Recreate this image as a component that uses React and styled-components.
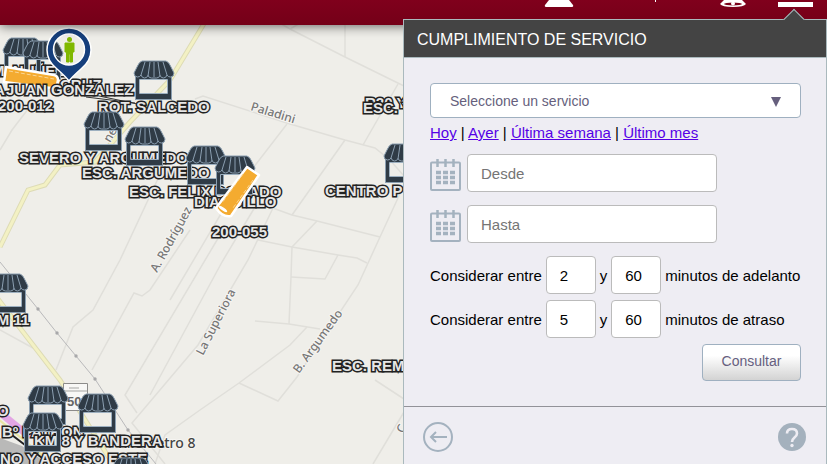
import { useState } from 'react';
import styled, { createGlobalStyle } from 'styled-components';

const STORES = [
  [2, 37], [22, 40], [133, 60], [83, 111], [124, 126], [185, 145], [214, 155],
  [383, 143], [-13, 273], [27, 385], [77, 393], [22, 412], [110, 457],
];

const LABELS = [
  { text: 'M. NUÑEZ', x: -8, y: 71 },
  { text: 'CRUZ', x: 60, y: 85 },
  { text: 'ROT. SALCEDO', x: 98, y: 107 },
  { text: '200-012', x: -2, y: 106 },
  { text: 'SEVERO Y ARGUMEDO', x: 19, y: 158 },
  { text: 'ESC. ARGUMEDO', x: 82, y: 173 },
  { text: 'ESC. FELIX DORADO', x: 129, y: 192 },
  { text: 'DIAGUILLO', x: 194, y: 202 },
  { text: '200-055', x: 212, y: 232 },
  { text: 'R20 Y', x: 365, y: 103 },
  { text: 'ESC. Y', x: 363, y: 108 },
  { text: 'CENTRO P', x: 325, y: 191 },
  { text: 'ESC. REM', x: 332, y: 366 },
  { text: 'KM 11', x: -14, y: 320 },
  { text: 'O', x: -3, y: 411 },
  { text: 'Bº PATRON', x: 2, y: 432 },
  { text: 'NO Y ACCESO ESTE', x: 0, y: 459 },
  { text: 'KM 8 Y BANDERA', x: 34, y: 441 },
];

const TOP_LABELS = [
  { text: 'A', x: -6, y: 90 },
  { text: 'JUAN GONZALEZ', x: 6, y: 90 },
];

const STREETS = [
  'M278 22L290 29L345 57L404 86', 'M345 22V57', 'M302 22L290 29', 'M398 84L363 145',
  'M195 99L203 96L290 124L345 140L375 148L390 160L404 176', 'M287 124L250 172L225 207L170 300',
  'M345 140L292 215', 'M270 207L292 215L317 221L380 237', 'M404 185L380 237L358 285L297 377L278 401L239 383',
  'M317 221L292 247', 'M258 240L292 247L338 255L357 258L367 263', 'M292 247L291 277L289 324',
  'M291 277L325 279L338 255', 'M273 208L248 260L198 345L132 423L165 464', 'M255 207L222 262L150 395',
  'M255 321L289 324L320 329', 'M307 327L290 345L239 383L200 410L165 435L155 464',
  'M375 380L404 399', 'M373 464L404 412', 'M163 168L120 260L93 310L73 327L56 370',
  'M190 230L150 290L142 296L134 293L92 370', 'M220 235L125 395L137 413', 'M0 330L33 348',
  'M0 150L12 130L35 100',
];

const YELLOW_ROADS = [
  'M205 22L170 80L130 122L95 162L60 165L45 185L28 190L0 247',
  'M-5 295L20 328L60 380L113 464',
];

const STREET_NAMES = [
  { text: 'Paladini', x: 250, y: 110, angle: 17 },
  { text: 'A. Rodríguez', x: 157, y: 273, angle: -61 },
  { text: 'La Superiora', x: 203, y: 356, angle: -63 },
  { text: 'B. Argumedo', x: 299, y: 374, angle: -54 },
  { text: 'ne', x: 110, y: 143, angle: -60 },
  { text: 'C', x: 403, y: 434, angle: -60 },
];

const StoreIcon = () => (
  <svg width="42" height="40" viewBox="0 0 42 40" aria-hidden="true">
    <path d="M3 16H38V39H3Z" fill="none" stroke="#8b9fb1" strokeWidth="2" />
    <path fillRule="evenodd" d="M3 15H38V39H3ZM7 20V33H34V20Z" fill="#2f3b46" />
    <path d="M6.500 19.500H34.500V33.500H6.500Z" fill="none" stroke="#9db0c0" />
    <path
      d="M9 1H33Q36 2 38 7L41 13Q41 17 37.500 17Q35 17 34 15Q33 18 30.500 18Q28 18 27 15.500Q26 18 23.500 18H18.500Q16 18 15 15.500Q14 18 11.500 18Q9 18 8 15Q7 17 4.500 17Q1 17 1 13L4 7Q6 2 9 1Z"
      fill="#2f3b46"
      stroke="#8b9fb1"
    />
    <path d="M12 2L8 15M17 2L15 16M21 2V17M25 2L27 16M30 2L34 15" stroke="#8b9fb1" fill="none" />
  </svg>
);

const CalendarIcon = () => (
  <svg width="31" height="32" viewBox="0 0 31 32" fill="none" aria-hidden="true">
    <rect x="1" y="3.500" width="29" height="27.500" rx="1" stroke="#a4b2bf" strokeWidth="2" />
    <path d="M7.500 0V8M15.500 0V8M23.500 0V8" stroke="#a4b2bf" strokeWidth="2.500" />
    <path d="M6 13.500H25M6 18.500H25M6 23.500H25" stroke="#a4b2bf" strokeWidth="3.400" strokeDasharray="5 2" />
  </svg>
);

const BackIcon = () => (
  <svg width="30" height="30" viewBox="0 0 30 30" fill="none" stroke="#a4b2bf" aria-hidden="true">
    <circle cx="15" cy="15" r="14" strokeWidth="2" />
    <path d="M24 15H8M13 10L8 15L13 20" strokeWidth="2" />
  </svg>
);

const HelpIcon = () => (
  <svg width="28" height="28" viewBox="0 0 28 28" fill="none" aria-hidden="true">
    <circle cx="14" cy="14" r="14" fill="#a4b1bd" />
    <path d="M9 10.500Q9 6 14 6Q19 6 19 10.500Q19 12.500 16.500 14.500Q14 16.500 14 19" stroke="#eeedf3" strokeWidth="2.600" />
    <circle cx="14" cy="22.500" r="1.700" fill="#eeedf3" />
  </svg>
);

const MapBase = () => (
  <MapDrawing aria-hidden="true">
    <path d="M0 438L22 446L48 464H0Z" fill="#b9b9b8" />
    {STREETS.map((d) => (
      <path key={d} d={d} stroke="#e0dfda" strokeWidth="1.500" fill="none" />
    ))}
    {YELLOW_ROADS.map((d) => (
      <g key={d} fill="none">
        <path d={d} stroke="#dddbb5" strokeWidth="5" />
        <path d={d} stroke="#f3f1c4" strokeWidth="3" />
      </g>
    ))}
    <path d="M0 262L38 309L57 333L76 356L95 379L128 430L156 464" stroke="#b9b9bb" fill="none" />
    {[[38, 309], [57, 333], [76, 356], [95, 379], [128, 430]].map(([x, y]) => (
      <circle key={x} cx={x} cy={y} r="1.700" fill="#a8a8aa" />
    ))}
    <path d="M-2 411L30 437" stroke="#e3a6e4" strokeWidth="7" />
    <path d="M-2 419L58 468" stroke="#e8e5a4" strokeWidth="2" />
    <path d="M8 432L50 464" stroke="#222" strokeWidth="2" />
    <path d="M80 92L142 105M86 97L135 103" stroke="#333" />
    <path d="M63.500 383.500H87.500V410.500H63.500Z" fill="#f8f8f6" stroke="#8c8c8a" />
    <path d="M63 391H87M69 388H79" stroke="#a5a5a3" />
    <ShieldText x="67" y="406">50</ShieldText>
    {STREET_NAMES.map(({ text, x, y, angle }) => (
      <StreetName key={text} transform={`translate(${x} ${y}) rotate(${angle})`}>{text}</StreetName>
    ))}
    <TownName x="118" y="448">Kilómetro 8</TownName>
  </MapDrawing>
);

const Vehicles = () => (
  <MapDrawing aria-hidden="true">
    <g fill="#f4ab30" stroke="#fff" strokeWidth="2.500" strokeLinejoin="round">
      <path d="M6 67L54 75Q58 76 58 80L57 85Q56 89 51 88L4 82Z" />
      <path d="M247 167L259 175L231 216Q223 218 216 208Z" />
    </g>
    <path d="M9 71L54 79M243 174L222 203M253 180L233 208" stroke="#fbd694" strokeDasharray="4 2" />
    <ellipse cx="223" cy="209" rx="5" ry="1.500" transform="rotate(35 223 209)" fill="#fff" />
    <path
      fillRule="evenodd"
      d="M69 81Q66 77 57 69Q47 61 47 50A22 22 0 0 1 91 50Q91 61 81 69Q72 77 69 81ZM69 34A15.500 15.500 0 1 0 69 65A15.500 15.500 0 1 0 69 34Z"
      fill="#163f7c"
      stroke="#fff"
      strokeWidth="1.500"
    />
    <circle cx="69.500" cy="39.500" r="2.500" fill="#80b800" />
    <path d="M65 43H74V52H72.500V62H70V54H69V62H66.500V52H65Z" fill="#80b800" stroke="#80b800" />
  </MapDrawing>
);

const LabelList = ({ items }) =>
  items.map(({ text, x, y }) => (
    <MapLabel key={text} style={{ left: x, top: y }}>{text}</MapLabel>
  ));

const MinuteRow = ({ kind, from, to }) => {
  const [min, setMin] = useState(from);
  const [max, setMax] = useState(to);

  return (
    <Minutes>
      <label htmlFor={`${kind}-min`}>Considerar entre</label>
      <TextInput id={`${kind}-min`} $width="50px" value={min} onChange={(e) => setMin(e.target.value)} />
      <label htmlFor={`${kind}-max`}>y</label>
      <TextInput id={`${kind}-max`} $width="50px" value={max} onChange={(e) => setMax(e.target.value)} />
      <span>minutos de {kind}</span>
    </Minutes>
  );
};

const ServicePanel = () => (
  <Panel>
    <PanelTitle>CUMPLIMIENTO DE SERVICIO</PanelTitle>
    <Form onSubmit={(e) => e.preventDefault()}>
      <SelectBox>
        <select aria-label="Servicio" defaultValue="">
          <option value="">Seleccione un servicio</option>
        </select>
        <svg width="10" height="10" viewBox="0 0 10 10" aria-hidden="true">
          <path d="M0 0H10L5 10Z" fill="#665f7d" />
        </svg>
      </SelectBox>
      <Shortcuts>
        <a href="#hoy">Hoy</a> | <a href="#ayer">Ayer</a> | <a href="#semana">Última semana</a> |{' '}
        <a href="#mes">Último mes</a>
      </Shortcuts>
      <Dates>
        <DateRow>
          <CalendarIcon />
          <TextInput $width="250px" placeholder="Desde" aria-label="Desde" />
        </DateRow>
        <DateRow>
          <CalendarIcon />
          <TextInput $width="250px" placeholder="Hasta" aria-label="Hasta" />
        </DateRow>
      </Dates>
      <MinuteRow kind="adelanto" from="2" to="60" />
      <MinuteRow kind="atraso" from="5" to="60" />
      <SubmitButton type="submit">Consultar</SubmitButton>
    </Form>
    <PanelFooter>
      <IconButton type="button" aria-label="Volver"><BackIcon /></IconButton>
      <IconButton type="button" aria-label="Ayuda"><HelpIcon /></IconButton>
    </PanelFooter>
  </Panel>
);

const App = () => (
  <>
    <GlobalStyle />
    <Page>
      <TopBar>
        <svg width="290" height="10" viewBox="540 0 290 10" aria-hidden="true">
          <path d="M549 0H569L573 5Q574 7 571 7H547Q544 7 545 5Z" fill="#fff" />
          <path d="M655.500 0V2" stroke="#fff" />
          <path d="M724 0H742L746 4Q744 7 733 7Q722 7 720 4Z" fill="#fff" />
          <ellipse cx="733" cy="4" rx="9" ry="1.500" fill="#7a001a" />
          <circle cx="733" cy="3.500" r="2" fill="#fff" />
          <path d="M778 2H813V7H778Z" fill="#fff" />
        </svg>
      </TopBar>
      <MapArea>
        <MapBase />
        <LabelList items={LABELS} />
        {STORES.map(([x, y]) => (
          <Marker key={`${x}-${y}`} style={{ left: x, top: y }}><StoreIcon /></Marker>
        ))}
        <Vehicles />
        <LabelList items={TOP_LABELS} />
      </MapArea>
      <ServicePanel />
    </Page>
  </>
);

export default App;

const GlobalStyle = createGlobalStyle`
  * {
    box-sizing: border-box;
  }

  body {
    margin: 0;
    font-family: "Liberation Sans", Arial, sans-serif;
    font-size: 15px;
    color: #000;
  }

  input, select, button {
    font-family: inherit;
  }

  svg {
    display: block;
  }
`;

const Page = styled.div`
  position: relative;
  display: flex;
  flex-direction: column;
  min-height: 100vh;
  overflow: hidden;
`;

const TopBar = styled.header`
  position: relative;
  z-index: 1;
  display: flex;
  justify-content: flex-end;
  height: 25px;
  background: linear-gradient(#80001c, #740018);
  box-shadow: 0 1px 12px rgba(0, 0, 0, .6);

  svg {
    margin-right: -3px;
  }
`;

/* the map runs on under the bar */
const MapArea = styled.main`
  position: relative;
  flex: 1;
  margin-top: -25px;
  overflow: hidden;
  background: #efeee9;
`;

const MapDrawing = styled.svg`
  position: absolute;
  inset: 0;
  width: 100%;
  height: 100%;
`;

const StreetName = styled.text`
  font-family: "Noto Sans", sans-serif;
  font-size: 12px;
  font-weight: 500;
  fill: #777;
  stroke: #f6f5f2;
  stroke-width: 2px;
  paint-order: stroke;
`;

const TownName = styled(StreetName)`
  font-size: 14px;
  fill: #444;
`;

const ShieldText = styled.text`
  font-size: 13px;
  font-weight: bold;
  fill: #666;
`;

const Marker = styled.div`
  position: absolute;
`;

const MapLabel = styled.span`
  position: absolute;
  transform: translateY(-50%);
  font-weight: bold;
  line-height: 18px;
  white-space: nowrap;
  color: #e6e6e6;
  -webkit-text-stroke: 3px #222;
  paint-order: stroke fill;
`;

const Panel = styled.section`
  position: absolute;
  z-index: 2;
  top: 19px;
  right: 0;
  bottom: 0;
  display: flex;
  flex-direction: column;
  width: 424px;
  max-width: 100%;
  background: #eeedf3;
  border: 1px solid #aab9bd;
  border-bottom: 0;

  &::before {
    content: "";
    position: absolute;
    top: -8px;
    right: 24px;
    width: 15px;
    height: 15px;
    background: #444;
    border: 1px solid #aab9bd;
    border-width: 1px 0 0 1px;
    transform: rotate(45deg);
  }
`;

const PanelTitle = styled.h1`
  position: relative;
  margin: 0;
  padding: 3px 13px 0;
  font-size: 16px;
  font-weight: normal;
  line-height: 34px;
  color: #fff;
  background: #444;
  border-bottom: 1px solid #aab9bd;
`;

const Form = styled.form`
  display: flex;
  flex-direction: column;
  padding: 25px 25px 25px 26px;
`;

const SelectBox = styled.div`
  position: relative;

  select {
    width: 100%;
    height: 35px;
    padding: 0 19px;
    appearance: none;
    font-size: 14px;
    color: #665f7d;
    background: #fff;
    border: 1px solid #9fb0c0;
    border-radius: 4px;
  }

  svg {
    position: absolute;
    top: 14px;
    right: 20px;
    pointer-events: none;
  }
`;

const Shortcuts = styled.nav`
  line-height: 30px;
  white-space: nowrap;

  a {
    color: #5500e6;
  }
`;

const Dates = styled.div`
  display: flex;
  flex-direction: column;
  gap: 13px;
  margin: 6px 0 13px;
`;

const DateRow = styled.div`
  display: flex;
  align-items: center;
  gap: 6px;

  svg {
    margin-top: 3px;
  }
`;

const TextInput = styled.input`
  width: ${({ $width }) => $width};
  height: 38px;
  padding: 0 13px;
  font-size: 15px;
  color: #000;
  background: #fff;
  border: 1px solid #bbb;
  border-radius: 4px;

  &::placeholder {
    color: #757575;
  }
`;

const Minutes = styled.div`
  display: flex;
  align-items: center;
  gap: 4px;
  margin-bottom: 6px;
  white-space: nowrap;
`;

const SubmitButton = styled.button`
  align-self: flex-end;
  width: 99px;
  height: 37px;
  padding: 0 0 3px;
  font-size: 14px;
  color: #665f80;
  background: linear-gradient(#fff 30%, #d3d3d3);
  border: 1px solid #9fb0c0;
  border-radius: 4px;
`;

const PanelFooter = styled.footer`
  display: flex;
  justify-content: space-between;
  align-items: center;
  padding: 15px 20px 12px 19px;
  border-top: 1px solid #929298;
`;

const IconButton = styled.button`
  padding: 0;
  background: none;
  border: 0;
`;
